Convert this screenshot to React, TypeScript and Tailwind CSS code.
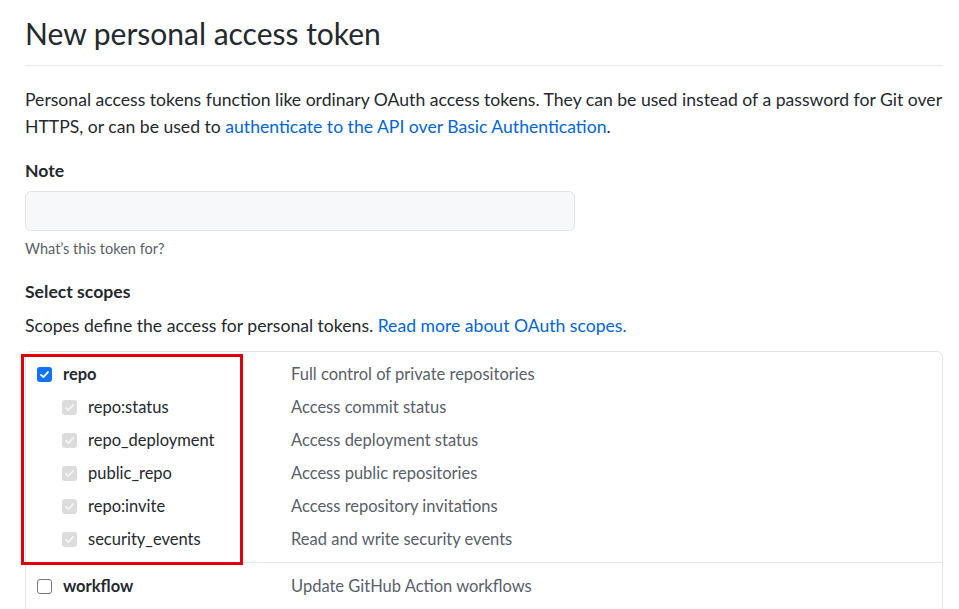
import React from 'react';

interface Scope {
  name: string;
  description: string;
}

const repoChildren: Scope[] = [
  { name: 'repo:status', description: 'Access commit status' },
  { name: 'repo_deployment', description: 'Access deployment status' },
  { name: 'public_repo', description: 'Access public repositories' },
  { name: 'repo:invite', description: 'Access repository invitations' },
  { name: 'security_events', description: 'Read and write security events' },
];

const CheckBox = ({ state }: { state: 'on' | 'off' | 'disabled' }) => {
  if (state === 'on') {
    return (
      <span className="flex h-[15px] w-[15px] items-center justify-center rounded-[3px] bg-[#0b73f5]">
        <svg width="11" height="11" viewBox="0 0 12 12" fill="none">
          <path d="M2.2 6.3l2.6 2.6 5-5.6" stroke="#fff" strokeWidth="2" strokeLinecap="round" strokeLinejoin="round" />
        </svg>
      </span>
    );
  }
  if (state === 'disabled') {
    return (
      <span className="flex h-[15px] w-[15px] items-center justify-center rounded-[3px] bg-[#dcdcdc]">
        <svg width="11" height="11" viewBox="0 0 12 12" fill="none">
          <path d="M2.2 6.3l2.6 2.6 5-5.6" stroke="#f4f4f4" strokeWidth="2" strokeLinecap="round" strokeLinejoin="round" />
        </svg>
      </span>
    );
  }
  return <span className="block h-[15px] w-[15px] rounded-[3px] border border-[#767676] bg-white" />;
};

const App = () => {
  return (
    <div className="min-h-[609px] bg-white pl-[25px] pr-[16px] pt-[14px] font-['Lato',sans-serif] text-[17.6px] text-[#24292e]">
      <h1 className="border-b border-[#e8eaed] pb-[13px] text-[30px] font-normal leading-[38px]">New personal access token</h1>

      <p className="mt-[20px] leading-[27px]">
        Personal access tokens function like ordinary OAuth access tokens. They can be used instead of a password for Git over HTTPS, or can be used to{' '}
        <a className="text-[#0366d6]">authenticate to the API over Basic Authentication</a>.
      </p>

      <div className="mt-[18px] font-bold leading-[26px]">Note</div>
      <div className="mt-[7px] h-[40px] w-[550px] rounded-[6px] border border-[#e1e4e8] bg-[#f7f8fa]" />
      <div className="mt-[7px] text-[14.5px] leading-[22px] text-[#586069]">What’s this token for?</div>

      <div className="mt-[19px] font-bold leading-[26px]">Select scopes</div>
      <p className="mt-[8px] leading-[26px]">
        Scopes define the access for personal tokens. <a className="text-[#0366d6]">Read more about OAuth scopes.</a>
      </p>

      <div className="relative mt-[12px] rounded-t-[6px] border border-[#e1e4e8] text-[16.5px]">
        <div className="pb-[6px] pt-[6px]">
          <div className="flex h-[33px] items-center">
            <div className="flex w-[265px] items-center pl-[11px]">
              <CheckBox state="on" />
              <span className="ml-[11px] font-bold">repo</span>
            </div>
            <span className="text-[#586069]">Full control of private repositories</span>
          </div>
          {repoChildren.map((s) => (
            <div key={s.name} className="flex h-[33px] items-center">
              <div className="flex w-[265px] items-center pl-[36px]">
                <CheckBox state="disabled" />
                <span className="ml-[11px]">{s.name}</span>
              </div>
              <span className="text-[#586069]">{s.description}</span>
            </div>
          ))}
        </div>
        <div className="flex h-[48px] items-center border-t border-[#e1e4e8]">
          <div className="flex w-[265px] items-center pl-[11px]">
            <CheckBox state="off" />
            <span className="ml-[11px] font-bold">workflow</span>
          </div>
          <span className="text-[#586069]">Update GitHub Action workflows</span>
        </div>
        <div className="absolute left-[-5px] top-[2px] h-[211px] w-[222px] border-[3px] border-[#e0000b]" />
      </div>
    </div>
  );
};

export default App;
